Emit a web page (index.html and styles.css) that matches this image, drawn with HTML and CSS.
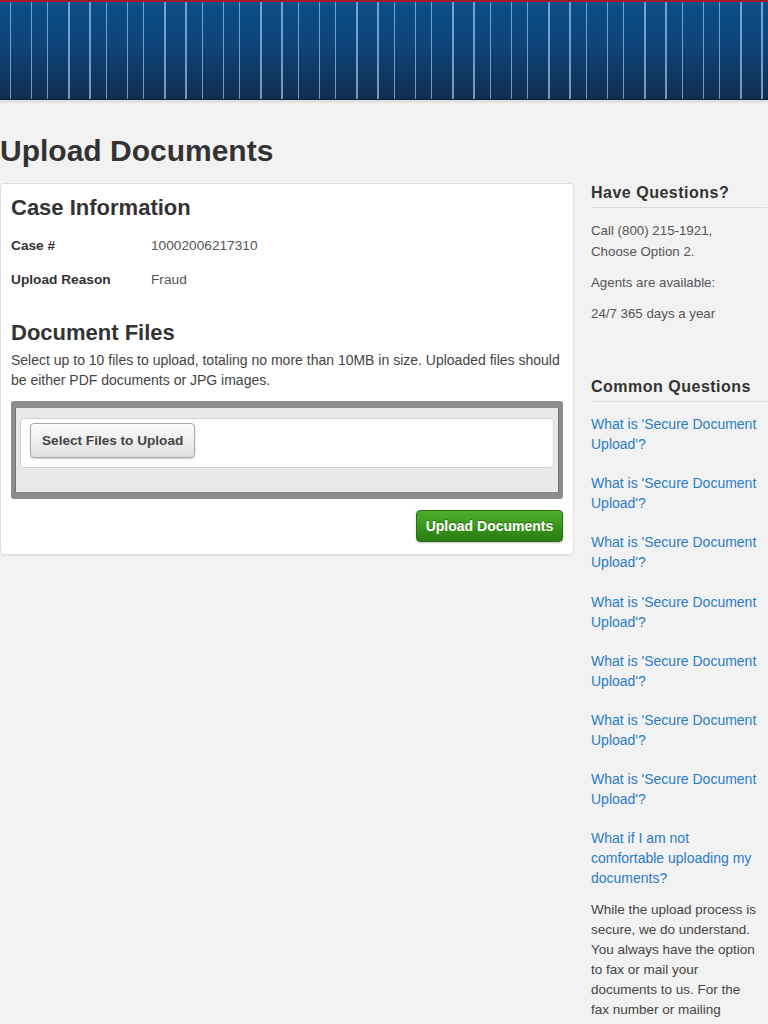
FILE: index.html
```html
<!DOCTYPE html>
<html lang="en">
<head>
<meta charset="utf-8">
<title>Upload Documents</title>
<link rel="stylesheet" href="styles.css">
</head>
<body>
<header class="masthead"></header>
<div class="page">
  <h1 class="page-title">Upload Documents</h1>
  <section class="card">
    <h2 class="card-heading">Case Information</h2>
    <dl class="case-info">
      <dt>Case #</dt>
      <dd>10002006217310</dd>
      <dt>Upload Reason</dt>
      <dd>Fraud</dd>
    </dl>
    <h2 class="card-heading files-heading">Document Files</h2>
    <p class="files-note">Select up to 10 files to upload, totaling no more than 10MB in size. Uploaded files should be either PDF documents or JPG images.</p>
    <div class="dropzone">
      <div class="dropzone-inner">
        <button class="btn-select" type="button">Select Files to Upload</button>
      </div>
    </div>
    <div class="actions">
      <button class="btn-upload" type="button">Upload Documents</button>
    </div>
  </section>
  <aside class="sidebar">
    <section class="side-section contact">
      <h3 class="side-heading">Have Questions?</h3>
      <p>Call (800) 215-1921,<br>Choose Option 2.</p>
      <p>Agents are available:</p>
      <p>24/7 365 days a year</p>
    </section>
    <section class="side-section faq">
      <h3 class="side-heading">Common Questions</h3>
      <a class="faq-link" href="#">What is 'Secure Document Upload'?</a>
      <a class="faq-link" href="#">What is 'Secure Document Upload'?</a>
      <a class="faq-link" href="#">What is 'Secure Document Upload'?</a>
      <a class="faq-link" href="#">What is 'Secure Document Upload'?</a>
      <a class="faq-link" href="#">What is 'Secure Document Upload'?</a>
      <a class="faq-link" href="#">What is 'Secure Document Upload'?</a>
      <a class="faq-link" href="#">What is 'Secure Document Upload'?</a>
      <a class="faq-link faq-last" href="#">What if I am not comfortable uploading my documents?</a>
      <p class="faq-answer">While the upload process is secure, we do understand. You always have the option to fax or mail your documents to us. For the<br>fax number or mailing address, please call us.</p>
    </section>
  </aside>
</div>
</body>
</html>
```

FILE: styles.css
```css
html, body {
  margin: 0;
  padding: 0;
  background: #f2f2f2;
  font-family: "Liberation Sans", Arial, sans-serif;
  color: #333;
}

.masthead {
  height: 98px;
  border-top: 2px solid #a3182b;
  border-bottom: 3px solid #e1e1e1;
  box-shadow: inset 0 -1px 0 #0c1d36;
  background-color: #0d3d6e;
  background-image:
    linear-gradient(90deg,
      transparent 10px, rgba(175, 205, 235, 0.65) 10px, rgba(175, 205, 235, 0.65) 11.5px, transparent 11.5px,
      transparent 31px, rgba(175, 205, 235, 0.65) 31px, rgba(175, 205, 235, 0.65) 32.5px, transparent 32.5px,
      transparent 47px, rgba(175, 205, 235, 0.65) 47px, rgba(175, 205, 235, 0.65) 48.5px, transparent 48.5px,
      transparent 68.5px, rgba(175, 205, 235, 0.65) 68.5px, rgba(175, 205, 235, 0.65) 70px, transparent 70px,
      transparent 89.5px, rgba(175, 205, 235, 0.65) 89.5px, rgba(175, 205, 235, 0.65) 91px, transparent 91px),
    linear-gradient(180deg, #0b4d88 0%, #0d4479 45%, #112b4e 100%);
  background-size: 96px 100%, 100% 100%;
  background-repeat: repeat-x, no-repeat;
}

.page {
  display: grid;
  grid-template-columns: 574px 176px;
  grid-template-rows: auto auto;
  column-gap: 17px;
  row-gap: 15px;
  padding-top: 30px;
}

.page-title {
  grid-column: 1;
  grid-row: 1;
  margin: 0;
  font-size: 30px;
  line-height: 35px;
  font-weight: bold;
  color: #333;
}

.card {
  grid-column: 1;
  grid-row: 2;
  align-self: start;
  background: #fff;
  border: 1px solid #dedede;
  border-radius: 4px;
  box-shadow: 0 1px 1px rgba(0, 0, 0, 0.05);
  padding: 11px 10px 12px 10px;
}

.card-heading {
  margin: 0 0 15px;
  font-size: 22px;
  line-height: 26px;
  font-weight: bold;
  color: #333;
}

.case-info {
  display: grid;
  grid-template-columns: 140px 1fr;
  row-gap: 14px;
  margin: 0;
  font-size: 13.7px;
  line-height: 20px;
}

.case-info dt {
  font-weight: bold;
  color: #333;
}

.case-info dd {
  margin: 0;
  color: #555;
}

.files-heading {
  margin: 30px 0 4px;
}

.files-note {
  margin: 0 0 11px;
  font-size: 14px;
  line-height: 20px;
  color: #444;
}

.dropzone {
  border-style: solid;
  border-color: #8c8c8c;
  border-width: 7px 4px 7px 4px;
  border-radius: 3px;
  background: #e9e9e9;
  padding: 10px 5px 24px;
  box-shadow: inset 1px 0 0 #6f6f6f, inset -1px 0 0 #6f6f6f;
}

.dropzone-inner {
  background: #fff;
  border: 1px solid #d2d2d2;
  border-radius: 4px;
  padding: 4px 9px 9px;
  display: flex;
}

.btn-select {
  height: 35px;
  padding: 0 11px;
  font-family: "Liberation Sans", Arial, sans-serif;
  font-size: 13.6px;
  font-weight: bold;
  color: #444;
  background: linear-gradient(180deg, #fbfbfb 0%, #ececec 60%, #dedede 100%);
  border: 1px solid #a9a9a9;
  border-radius: 4px;
  box-shadow: 0 1px 2px rgba(0, 0, 0, 0.2), inset 0 1px 0 #fff;
}

.actions {
  display: flex;
  justify-content: flex-end;
  margin-top: 11px;
}

.btn-upload {
  height: 32px;
  width: 147px;
  padding: 0;
  font-family: "Liberation Sans", Arial, sans-serif;
  font-size: 14px;
  font-weight: bold;
  color: #fff;
  background: linear-gradient(180deg, #4fae2c 0%, #3a961c 50%, #2a7b10 100%);
  border: 1px solid #2c6d14;
  border-radius: 4px;
  text-shadow: 0 -1px 0 rgba(0, 0, 0, 0.3);
  box-shadow: 0 1px 2px rgba(0, 0, 0, 0.25);
}

.sidebar {
  grid-column: 2;
  grid-row: 2;
}

.side-heading {
  margin: 0 0 12px;
  padding-bottom: 4px;
  border-bottom: 1px solid #dcdcdc;
  font-size: 16px;
  line-height: 20px;
  font-weight: bold;
  letter-spacing: 0.5px;
  color: #333;
  white-space: nowrap;
}

.contact p {
  margin: 0 0 10px;
  font-size: 13.3px;
  line-height: 21px;
  color: #555;
}

.contact p:last-child {
  margin-bottom: 0;
}

.faq {
  margin-top: 53px;
}

.faq-link {
  display: block;
  margin-bottom: 19.2px;
  padding-right: 6px;
  font-size: 14px;
  line-height: 20px;
  color: #2a7cc5;
  text-decoration: none;
}

.faq-link.faq-last {
  margin-bottom: 12px;
}

.faq-answer {
  margin: 0;
  font-size: 13.5px;
  line-height: 20px;
  color: #444;
}
```
